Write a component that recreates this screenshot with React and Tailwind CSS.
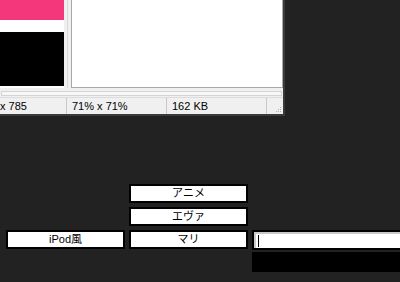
import React from "react";

const jp = { fontFamily: '"Liberation Sans", "Noto Sans CJK JP", sans-serif' };

const Btn = ({ children, className = "" }) => (
  <div
    className={`h-[19px] border-2 border-black bg-white flex items-center justify-center text-[11px] leading-none text-black ${className}`}
    style={jp}
  >
    {children}
  </div>
);

export default function App() {
  return (
    <div className="w-[400px] h-[282px] overflow-hidden bg-[#222222]" style={jp}>
      {/* image viewer window, partly off screen */}
      <div className="w-[285px] h-[116px] bg-[#f0f0f0] border-r-2 border-b-2 border-[#3a3a3a] flex flex-col">
        <div className="flex h-[88px]">
          {/* preview strip */}
          <div className="w-[64px] bg-white flex flex-col">
            <div className="h-[20px] bg-[#f4367a]" />
            <div className="h-[12px]" />
            <div className="h-[54px] bg-black" />
          </div>
          <div className="w-[7px] flex">
            <div className="w-[3px]" />
            <div className="w-[1px] bg-[#d8d8d8]" />
          </div>
          <div className="flex-1 bg-white border-l border-b border-r border-[#a8a8a8]" />
        </div>
        {/* scroll trough */}
        <div className="h-[9px] px-[1px] pt-[3px]">
          <div className="h-[5px] border border-[#d4d4d4] bg-[#f7f7f7]" />
        </div>
        {/* status bar */}
        <div className="flex-1 flex items-center text-[11px] text-black border-t border-[#dcdcdc]">
          <div className="w-[67px] h-full flex items-center border-r border-[#c8c8c8] leading-none">
            x 785
          </div>
          <div className="w-[100px] h-full flex items-center pl-[5px] border-r border-[#c8c8c8] leading-none">
            71% x 71%
          </div>
          <div className="w-[100px] h-full flex items-center pl-[5px] border-r border-[#c8c8c8] leading-none">
            162 KB
          </div>
          <div className="flex-1 h-full flex items-end justify-end pr-[1px] pb-[1px]">
            <svg width="7" height="7" viewBox="0 0 7 7">
              <rect x="5" y="1" width="1" height="1" fill="#b0b0b0" />
              <rect x="3" y="3" width="1" height="1" fill="#b0b0b0" />
              <rect x="5" y="3" width="1" height="1" fill="#b0b0b0" />
              <rect x="1" y="5" width="1" height="1" fill="#b0b0b0" />
              <rect x="3" y="5" width="1" height="1" fill="#b0b0b0" />
              <rect x="5" y="5" width="1" height="1" fill="#b0b0b0" />
            </svg>
          </div>
        </div>
      </div>

      {/* buttons and input */}
      <div className="mt-[68px] pl-[6px] grid grid-cols-[119px_119px_160px] gap-x-[4px] gap-y-[4px]">
        <div />
        <Btn>アニメ</Btn>
        <div />
        <div />
        <Btn>エヴァ</Btn>
        <div />
        <Btn>iPod風</Btn>
        <Btn>マリ</Btn>
        <div className="h-[20px] border-2 border-black bg-white flex">
          <div className="flex-1 border-t-2 border-l-2 border-[#c8c8c8] flex items-center pl-[2px]">
            <span className="w-[1px] h-[12px] bg-black" />
          </div>
        </div>
        <div />
        <div />
        <div className="h-[20px] bg-black mt-[-2px]" />
      </div>
    </div>
  );
}
